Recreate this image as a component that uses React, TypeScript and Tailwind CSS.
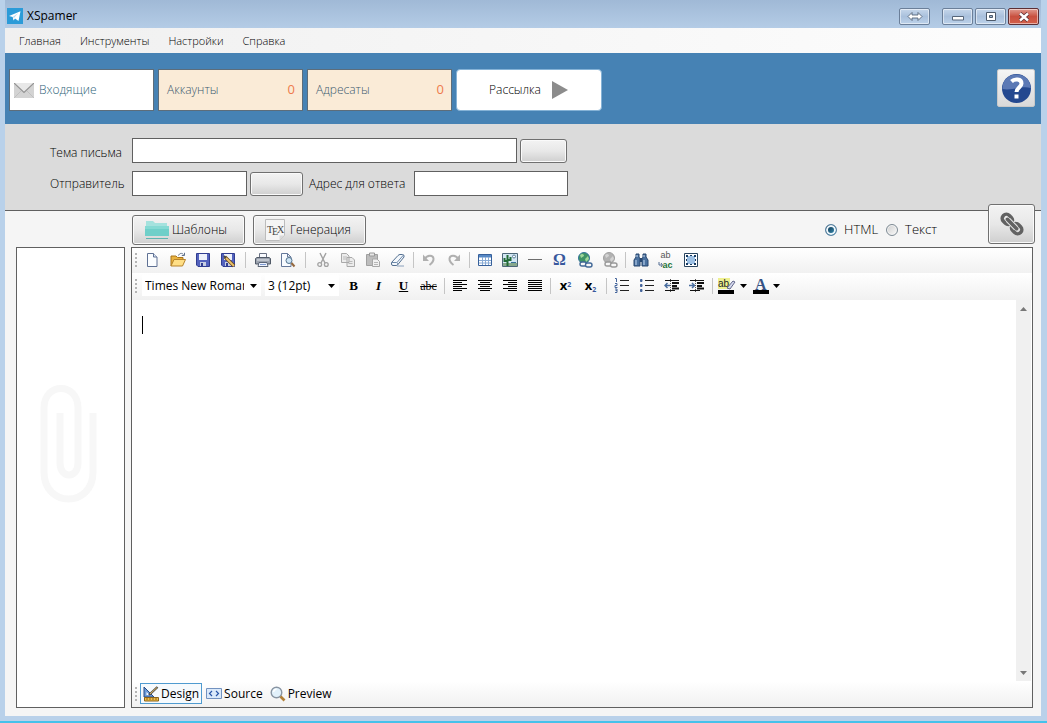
import React, { useState } from 'react';
import clsx from 'clsx';

const menu = ['Главная', 'Инструменты', 'Настройки', 'Справка'];

const grayButton =
  'border border-[#707070] rounded-[3px] bg-linear-to-b from-[#f3f3f3] from-0% via-[#e8e8e8] via-50% to-[#cfcfcf] shadow-[inset_0_0_0_1px_#fafafa]';

const fieldStyle = 'h-[25px] min-w-0 border border-[#606060] bg-white px-1 text-[12px] outline-none';

function Svg({ children }: { children: React.ReactNode }) {
  return (
    <svg width="16" height="16" viewBox="0 0 16 16" fill="none" aria-hidden="true" className="shrink-0">
      {children}
    </svg>
  );
}

const NewIcon = () => (
  <Svg>
    <path d="M2.5 1.5h6L12 5v9.500H2.500z" fill="#fbfdff" stroke="#5f7194" />
    <path d="M8.5 1.5V5H12" fill="#dce5f3" stroke="#5f7194" />
  </Svg>
);

const OpenIcon = () => (
  <Svg>
    <path d="M1 14V4h5l1.5 1.5H13V8" fill="#e9b33f" stroke="#a8741a" />
    <path d="M1 14 4 7.5h11.5L12.5 14z" fill="#ffdf86" stroke="#b7832a" />
    <path d="M8.5 3.5C9.5 1 12 .8 13.5 2.5M14.5.8v2.7h-2.7" stroke="#60728d" />
  </Svg>
);

const SaveIcon = ({ edit = false }: { edit?: boolean }) => (
  <Svg>
    <path d="M1.5 1.5h13v13H3L1.5 13z" fill="#5362bd" stroke="#303d91" />
    <path d="M4 2h8v6H4z" fill="#edf1fb" />
    <path d="M5 10h6v4H5z" fill="#c7cee3" />
    <path d="M6 11h2v3H6z" fill="#303d91" />
    {edit && (
      <>
        <path d="m5 5 9 9" stroke="#6c4b1d" strokeWidth="3.4" />
        <path d="m5 5 9 9" stroke="#edc268" strokeWidth="1.8" />
        <path d="m4 4 2 2" stroke="#454545" strokeWidth="2" />
      </>
    )}
  </Svg>
);

const PrintIcon = () => (
  <Svg>
    <path d="M4.5 6V1.5h7V6" fill="#f9fbff" stroke="#687082" />
    <path d="M.5 6.5 2 5.5h12l1.5 1V12H.5z" fill="#9ca3af" stroke="#505967" />
    <path d="M2 8h12" stroke="#e4e8ee" />
    <path d="M4 10.500h8l1 4H3z" fill="#eef3ff" stroke="#5c6677" />
    <path d="M5 12.5h6" stroke="#7e9ad1" />
  </Svg>
);

const FindPageIcon = () => (
  <Svg>
    <path d="M1.5 1.5h6L11 5v9.500H1.500z" fill="#f8fbff" stroke="#65789a" />
    <path d="M7.5 1.5V5H11" stroke="#65789a" />
    <circle cx="9" cy="8.5" r="3" fill="#cfe5f5" stroke="#53728d" />
    <path d="m11.5 11 3 3.5" stroke="#94683e" strokeWidth="2" />
  </Svg>
);

const CutIcon = () => (
  <Svg>
    <path d="m5 1 5 10M11 1 6 11" stroke="#a2a2a2" strokeWidth="1.4" />
    <circle cx="4.7" cy="12.5" r="1.9" stroke="#a2a2a2" strokeWidth="1.3" />
    <circle cx="11.3" cy="12.5" r="1.9" stroke="#a2a2a2" strokeWidth="1.3" />
  </Svg>
);

const CopyIcon = () => (
  <Svg>
    <path d="M1.5 1.5h5L9 4v6.5H1.5zM7 5.5h5L14.5 8v6.5H7z" fill="#ececec" stroke="#a9a9a9" />
    <path d="M3 5h4M3 7h4M8.5 9.5h4M8.5 11.5h4" stroke="#bababa" />
  </Svg>
);

const PasteIcon = () => (
  <Svg>
    <path d="M1.5 2.5h11v11h-11z" fill="#bdbdbd" stroke="#a0a0a0" />
    <path d="M4.5 1h5v3h-5z" fill="#e7e7e7" stroke="#999" />
    <path d="M7.5 7H12l2.500 2.500v5h-7z" fill="#f1f1f1" stroke="#a7a7a7" />
    <path d="M9 10.5h4M9 12.5h4" stroke="#b7b7b7" />
  </Svg>
);

const EraserIcon = () => (
  <Svg>
    <path d="M1.5 10.5 8 3.500q1-1 2-1h2.500Q14 2.500 14 4v1l-6.500 8q-.5.5-1.500.5H3q-1.500 0-1.500-1.500z" fill="#f4f8fc" stroke="#526e90" />
    <path d="M2 10.5h4.500q1 0 1 1V13M7 10.5 13.500 3" stroke="#6d89aa" />
    <path d="M7 14h7" stroke="#8aa0bc" />
  </Svg>
);

const UndoIcon = ({ redo = false }: { redo?: boolean }) => (
  <Svg>
    <g transform={redo ? 'matrix(-1 0 0 1 16 0)' : undefined}>
      <path d="M4 6.500C6 3 12 2.500 12.500 6.500c.3 3-2 5-4 6.500" stroke="#b0b0b0" strokeWidth="2" />
      <path d="M2 2.500V9h6z" fill="#b0b0b0" />
    </g>
  </Svg>
);

const TableIcon = () => (
  <Svg>
    <path d="M1.5 2.5h13v11h-13z" fill="#fff" stroke="#36609b" />
    <path d="M2 3h12v2.500H2z" fill="#5688c5" />
    <path d="M2 8.5h12M2 11h12M5.500 5v8M8.500 5v8M11.500 5v8" stroke="#89abd5" />
  </Svg>
);

const ImageIcon = () => (
  <Svg>
    <path d="M.5 1.5h15v13H.5z" fill="#d3e7f3" stroke="#4d6778" />
    <path d="M1 11h14v3H1z" fill="#87a88c" />
    <path d="M5.5 3v11M2.500 6v3h3M8.500 5v3h-3" stroke="#226b36" strokeWidth="2" />
    <circle cx="12" cy="4.5" r="1.5" fill="#fff" stroke="#597e9a" />
    <path d="M9 10.5h5" stroke="#36719a" />
  </Svg>
);

const LineIcon = () => (
  <Svg>
    <path d="M1 7.5h14" stroke="#6e6e6e" />
  </Svg>
);

const OmegaIcon = () => <span className="font-['Liberation_Serif',serif] text-[16px] leading-4 font-bold text-[#38589d]">Ω</span>;

const GlobeIcon = ({ off = false }: { off?: boolean }) => (
  <Svg>
    <circle cx="7" cy="6" r="5.5" fill={off ? '#b2b2b2' : '#3f9466'} stroke={off ? '#a0a0a0' : '#34759a'} />
    <path d="M3 3c2-2 4-1 4 1L4 6zM8 7l3-3 1 3-3 3z" fill={off ? '#d3d3d3' : '#a0d89a'} />
    <rect x="3" y="10" width="6.5" height="4" rx="2" fill="#f7f7f7" stroke={off ? '#999' : '#416897'} strokeWidth="1.4" />
    <rect x="8.5" y="11" width="6.5" height="4" rx="2" fill="#f7f7f7" stroke={off ? '#999' : '#416897'} strokeWidth="1.4" />
  </Svg>
);

const BinocularsIcon = () => (
  <Svg>
    <path d="M3 2h3v3l1 2v7H1V8l2-3zM10 2h3v3l2 3v6H9V7l1-2z" fill="#4a719f" stroke="#27476f" />
    <path d="M7 6h2v4H7z" fill="#27476f" />
    <path d="M3 8v5M11 8v5M4 3v2M11 3v2" stroke="#c6dcf4" />
  </Svg>
);

const ReplaceIcon = () => (
  <span className="flex w-4 flex-col font-['Liberation_Sans',sans-serif] text-[9px] leading-[10px]">
    <span className="text-[#555]">ab</span>
    <span className="flex items-center font-bold text-[#26743b]">
      <svg width="5" height="6" viewBox="0 0 5 6" fill="none" aria-hidden="true">
        <path d="M1 0v3h3M3 1l1.500 2L3 5" stroke="#536c93" />
      </svg>
      ac
    </span>
  </span>
);

const SelectAllIcon = () => (
  <Svg>
    <path d="M1.5 1.5h13v13h-13z" fill="#fff" stroke="#29445f" />
    <path d="M4 4h8v8H4z" fill="#9dc0e4" />
    <path d="M3 3h2v2H3zM11 3h2v2h-2zM3 11h2v2H3zM11 11h2v2h-2zM7 3h2v1H7zM7 12h2v1H7zM3 7h1v2H3zM12 7h1v2h-1z" fill="#173a60" />
  </Svg>
);

const alignPaths = {
  left: 'M1 2.5h14M1 4.5h9M1 6.5h14M1 8.5h9M1 10.5h14M1 12.5h9',
  center: 'M1 2.5h14M3 4.5h10M1 6.5h14M3 8.5h10M1 10.5h14M3 12.5h10',
  right: 'M1 2.5h14M6 4.5h9M1 6.5h14M6 8.5h9M1 10.5h14M6 12.5h9',
  justify: 'M1 2.5h14M1 4.5h14M1 6.5h14M1 8.5h14M1 10.5h14M1 12.5h14',
};

const AlignIcon = ({ side }: { side: keyof typeof alignPaths }) => (
  <Svg>
    <path d={alignPaths[side]} stroke="#000" />
  </Svg>
);

const ListIcon = ({ numbered = false }: { numbered?: boolean }) => (
  <Svg>
    <path d="M6 2.5h9M6 7.5h9M6 12.5h9" stroke="#222" />
    {numbered ? (
      <path d="M1 .5h1.500V4M1 5.500h2v2H1v2h2.500M1 11h2v3.500H1M1.500 12.500H3" stroke="#46669c" />
    ) : (
      <path d="M1.500 1.500H3v2H1.500zM1.500 6.500H3v2H1.500zM1.500 11.500H3v2H1.500z" fill="#46669c" stroke="#46669c" />
    )}
  </Svg>
);

const IndentIcon = ({ out = false }: { out?: boolean }) => (
  <Svg>
    <path d="M1 2.5h14M1 12.5h10" stroke="#111" />
    <path d="M8 5h7M8 8h5M8 10.5h7" stroke="#111" strokeWidth="1.8" />
    <path d={out ? 'M3.5 5 1 7.500 3.500 10M1 7.500h5' : 'M3 5l2.500 2.500L3 10M0 7.500h5.500'} stroke="#496d9f" strokeWidth="1.5" />
    <path d="M6.5 1v14" stroke="#555" strokeDasharray="1 1" />
  </Svg>
);

const CaretDown = () => (
  <svg width="7" height="4" viewBox="0 0 7 4" aria-hidden="true" className="shrink-0">
    <path d="M0 0h7L3.500 4z" fill="#000" />
  </svg>
);

function Tool({ label, children, disabled }: { label: string; children: React.ReactNode; disabled?: boolean }) {
  return (
    <button type="button" aria-label={label} disabled={disabled} className="flex h-6 w-[25px] shrink-0 items-center justify-center">
      {children}
    </button>
  );
}

function Sep({ wide }: { wide?: boolean }) {
  return (
    <span className={clsx('flex shrink-0 justify-center', wide ? 'w-[10px]' : 'w-[6px]')}>
      <span className="h-4 w-px bg-[#c5c5c5]" />
    </span>
  );
}

const Grip = () => (
  <span className="mr-[3px] flex w-[3px] shrink-0 flex-col gap-[2px] pl-px">
    {[0, 1, 2, 3].map((i) => (
      <span key={i} className="size-[2px] bg-[#b4b4b4]" />
    ))}
  </span>
);

function Dropdown({ label, value, className }: { label: string; value: string; className: string }) {
  return (
    <div className={clsx('relative shrink-0', className)}>
      <select
        aria-label={label}
        defaultValue={value}
        className="block h-[21px] w-full appearance-none overflow-hidden bg-white pr-[17px] pl-[3px] text-[12px] leading-5 outline-none"
      >
        <option>{value}</option>
      </select>
      <span className="pointer-events-none absolute top-0 right-1 flex h-[21px] items-center">
        <CaretDown />
      </span>
    </div>
  );
}

function WinButton({ label, close, children }: { label: string; close?: boolean; children: React.ReactNode }) {
  return (
    <button
      type="button"
      aria-label={label}
      className={clsx(
        'flex h-[17px] w-[31px] items-center justify-center rounded-[2px] border shadow-[inset_0_0_0_1px_#ffffff80]',
        close
          ? 'border-[#5c2f35] bg-linear-to-b from-[#df9a90] via-[#c8503f] via-50% to-[#d4604b]'
          : 'border-[#6b7f99] bg-linear-to-b from-[#c6d7eb] via-[#a9c0dc] via-50% to-[#bcd2ea]'
      )}
    >
      {children}
    </button>
  );
}

function TitleBar() {
  return (
    <header className="flex h-7 items-start justify-between bg-linear-to-b from-[#a0b9d6] to-[#b4cce6] pr-[2px] pl-[2px]">
      <div className="flex items-center gap-1 pt-2">
        <svg width="16" height="16" viewBox="0 0 16 16" aria-hidden="true">
          <path d="M0 0h16v16H0z" fill="#2b9bd8" />
          <path d="M2 8 13.5 3.200 11.500 13 8 10.500l-1.500 2-.8-3.500z" fill="#fff" />
          <path d="m5.700 9 5.500-4L7 10z" fill="#b9dcf0" />
        </svg>
        <h1 className="text-[12px] leading-4">XSpamer</h1>
      </div>
      <div className="flex pt-2">
        <WinButton label="Переключить">
          <svg width="16" height="9" viewBox="0 0 16 9" aria-hidden="true">
            <path d="m1 4.500 4-4V3h6V.5l4 4-4 4V6H5v2.500z" fill="#fff" stroke="#566579" strokeWidth=".9" />
          </svg>
        </WinButton>
        <div className="ml-3 flex gap-[2px]">
          <WinButton label="Свернуть">
            <svg width="12" height="9" viewBox="0 0 12 9" aria-hidden="true">
              <path d="M.5 4.500h11V8H.5z" fill="#fff" stroke="#566579" />
            </svg>
          </WinButton>
          <WinButton label="Развернуть">
            <svg width="12" height="9" viewBox="0 0 12 9" aria-hidden="true">
              <path d="M1.500.5h9v8h-9z" fill="#fff" stroke="#4d5a6b" />
              <path d="M4.500 3.500h3v2h-3z" fill="#9fb5d2" stroke="#4d5a6b" />
            </svg>
          </WinButton>
          <WinButton label="Закрыть" close>
            <svg width="12" height="10" viewBox="0 0 12 10" aria-hidden="true">
              <path d="m2 1.500 8 7M10 1.500l-8 7" stroke="#5b2f35" strokeWidth="4" />
              <path d="m2 1.500 8 7M10 1.500l-8 7" stroke="#fff" strokeWidth="2.4" />
            </svg>
          </WinButton>
        </div>
      </div>
    </header>
  );
}

function CountTile({ title, count }: { title: string; count: number }) {
  return (
    <button type="button" className="flex h-[42px] w-[145px] items-center justify-between border border-[#5d6d7a] bg-[#faebd7] pr-[7px] pl-2 text-[12px]">
      <span className="font-light text-[#3c5a70]">{title}</span>
      <span className="text-[13px] text-[#ee7a4c]">{count}</span>
    </button>
  );
}

function Banner() {
  return (
    <div className="flex h-[71px] items-start justify-between bg-[#4682b4] pt-4 pr-[6px] pl-1">
      <div className="flex gap-1">
        <button type="button" className="flex h-[42px] w-[145px] items-center gap-[5px] border border-[#5d6d7a] bg-white pl-1 text-[12px] font-light text-[#2f6478]">
          <svg width="20" height="15" viewBox="0 0 20 15" fill="none" aria-hidden="true">
            <path d="M0 0h20v15H0z" fill="#d3d3d3" />
            <path d="m0 15 7-7M20 15l-7-7" stroke="#c0c0c0" />
            <path d="m0 0 10 9.500L20 0z" fill="#e8e8e8" />
            <path d="m0 0 10 9.500L20 0" stroke="#929292" strokeWidth="1.2" />
          </svg>
          Входящие
        </button>
        <CountTile title="Аккаунты" count={0} />
        <CountTile title="Адресаты" count={0} />
        <button type="button" className="flex h-[42px] w-[146px] items-center justify-center gap-[10px] rounded-[4px] border border-[#85b2d6] bg-white text-[12px] font-light text-black">
          Рассылка
          <svg width="18" height="18" viewBox="0 0 18 18" aria-hidden="true">
            <path d="M1 0v18l16-9z" fill="#8c8c8c" />
          </svg>
        </button>
      </div>
      <button type="button" aria-label="Помощь" className="flex size-[38px] items-center justify-center rounded-[2px] border border-[#c9c9c9] bg-linear-to-b from-[#f5f5f5] to-[#d9d9d9]">
        <svg width="31" height="31" viewBox="0 0 31 31" fill="none" aria-hidden="true">
          <circle cx="15.5" cy="15.5" r="14.5" fill="#24488f" />
          <path d="M1.500 16C1 8 7 1.500 15.500 1.500S30 8 29.500 15c-8-3-18 3-28 1z" fill="#5c79b5" />
          <path d="M10.500 8.500c3-3 10-3 10 2 0 4-5 4-5 8.500" stroke="#fff" strokeWidth="4" />
          <path d="M13.500 21.500h4v4h-4z" fill="#fff" />
        </svg>
      </button>
    </div>
  );
}

function LetterForm() {
  return (
    <form className="flex h-[87px] flex-col gap-2 border-b border-[#606060] bg-[#dbdbdb] pt-[14px] pl-[45px] text-[12px] font-light">
      <div className="flex items-center">
        <label htmlFor="subject" className="w-[82px] pt-1 leading-5">Тема письма</label>
        <input id="subject" type="text" className={clsx(fieldStyle, 'w-[385px]')} />
        <button type="button" aria-label="Вставить в тему" className={clsx(grayButton, 'ml-[3px] h-6 w-[47px]')} />
      </div>
      <div className="flex items-center">
        <label htmlFor="sender" className="w-[82px] leading-5">Отправитель</label>
        <input id="sender" type="text" className={clsx(fieldStyle, 'w-[115px]')} />
        <button type="button" aria-label="Выбрать отправителя" className={clsx(grayButton, 'ml-[3px] h-6 w-[53px]')} />
        <label htmlFor="reply" className="ml-[6px] w-[105px] leading-5 whitespace-nowrap">Адрес для ответа</label>
        <input id="reply" type="text" className={clsx(fieldStyle, 'w-[154px]')} />
      </div>
    </form>
  );
}

function FormatRadio({ label, checked, onChange }: { label: string; checked: boolean; onChange: () => void }) {
  return (
    <label className="flex items-center gap-[7px]">
      <input
        type="radio"
        name="format"
        checked={checked}
        onChange={onChange}
        className="size-3 appearance-none rounded-full border border-[#7d8a94] bg-linear-to-br from-[#cfcfcf] to-[#fafafa] shadow-[inset_0_0_0_1px_#f4f4f4] checked:border-[#5580a0] checked:from-[#0b2a42] checked:to-[#3d9cc4] checked:shadow-[inset_0_0_0_2px_#eef6fb]"
      />
      {label}
    </label>
  );
}

function ModeBar() {
  const [format, setFormat] = useState('HTML');
  return (
    <div className="relative flex h-9 items-start justify-between pt-1 pl-[127px] text-[12px] font-light">
      <div className="flex gap-2">
        <button type="button" className={clsx(grayButton, 'flex h-[30px] w-[113px] items-center gap-[3px] pl-3')}>
          <svg width="24" height="20" viewBox="0 0 24 20" aria-hidden="true">
            <path d="M1 1h7l2 2h12v8H1z" fill="#a5e2de" />
            <path d="M0 6h24v10H0z" fill="#6fcfc9" />
            <path d="M0 6h24v3H0z" fill="#86dad4" />
            <path d="M1 18h22v1H1z" fill="#5eb5b1" />
          </svg>
          Шаблоны
        </button>
        <button type="button" className={clsx(grayButton, 'flex h-[30px] w-[113px] items-center gap-[5px] pl-[11px]')}>
          <svg width="20" height="22" viewBox="0 0 20 22" aria-hidden="true">
            <path d="M.5.5h19v16l-5 5H.5z" fill="#f5f5f5" stroke="#bcbcbc" />
            <path d="M19.500 16.500h-5v5z" fill="#d9d9d9" />
            <g fill="#444" className="font-['Liberation_Serif',serif] text-[10px]">
              <text x="2" y="14">T</text>
              <text x="7" y="16">E</text>
              <text x="12" y="14">X</text>
            </g>
          </svg>
          Генерация
        </button>
      </div>
      <div className="mr-[104px] flex h-[30px] items-center gap-2 text-[13px]">
        <FormatRadio label="HTML" checked={format === 'HTML'} onChange={() => setFormat('HTML')} />
        <FormatRadio label="Текст" checked={format === 'TEXT'} onChange={() => setFormat('TEXT')} />
      </div>
      <button type="button" aria-label="Ссылка" className={clsx(grayButton, 'absolute right-[6px] bottom-[3px] flex h-10 w-[47px] items-center justify-center')}>
        <svg width="26" height="26" viewBox="0 0 28 28" fill="none" stroke="#626262" strokeWidth="3.8" aria-hidden="true">
          <rect x="3" y="4.5" width="12" height="9" rx="4.5" transform="rotate(45 9 9)" />
          <rect x="13" y="14.5" width="12" height="9" rx="4.5" transform="rotate(45 19 19)" />
          <path d="m9.500 9.500 9 9" stroke="#e4e4e4" strokeWidth="6" />
          <path d="m9 9 10 10" strokeLinecap="round" />
        </svg>
      </button>
    </div>
  );
}

function Toolbars() {
  return (
    <div className="text-black">
      <div className="flex h-[25px] items-center bg-linear-to-b from-white to-[#f1f1f1] pb-[2px] pl-[2px]">
        <Grip />
        <div className="flex items-center">
          <Tool label="Новый"><NewIcon /></Tool>
          <Tool label="Открыть"><OpenIcon /></Tool>
          <Tool label="Сохранить"><SaveIcon /></Tool>
          <Tool label="Сохранить как"><SaveIcon edit /></Tool>
          <Sep wide />
          <Tool label="Печать"><PrintIcon /></Tool>
          <Tool label="Просмотр печати"><FindPageIcon /></Tool>
          <Sep wide />
          <Tool label="Вырезать" disabled><CutIcon /></Tool>
          <Tool label="Копировать" disabled><CopyIcon /></Tool>
          <Tool label="Вставить" disabled><PasteIcon /></Tool>
          <Tool label="Очистить"><EraserIcon /></Tool>
          <Sep />
          <Tool label="Отменить" disabled><UndoIcon /></Tool>
          <Tool label="Повторить" disabled><UndoIcon redo /></Tool>
          <Sep />
          <Tool label="Таблица"><TableIcon /></Tool>
          <Tool label="Изображение"><ImageIcon /></Tool>
          <Tool label="Линия"><LineIcon /></Tool>
          <Tool label="Символ"><OmegaIcon /></Tool>
          <Tool label="Вставить ссылку"><GlobeIcon /></Tool>
          <Tool label="Удалить ссылку" disabled><GlobeIcon off /></Tool>
          <Sep />
          <Tool label="Найти"><BinocularsIcon /></Tool>
          <Tool label="Заменить"><ReplaceIcon /></Tool>
          <Tool label="Выделить всё"><SelectAllIcon /></Tool>
        </div>
      </div>
      <div className="flex h-[27px] items-center bg-linear-to-b from-white to-[#f1f1f1] pb-[2px] pl-[2px]">
        <Grip />
        <Dropdown label="Шрифт" value="Times New Roman" className="ml-[2px] w-[119px]" />
        <Dropdown label="Размер" value="3 (12pt)" className="mr-[2px] ml-1 w-[74px]" />
        <div className="flex items-center font-['Liberation_Serif',serif] text-[13px] font-bold">
          <Tool label="Полужирный">B</Tool>
          <Tool label="Курсив"><i>I</i></Tool>
          <Tool label="Подчёркнутый"><u>U</u></Tool>
          <Tool label="Зачёркнутый"><s className="text-[12px] font-normal">abc</s></Tool>
          <Sep />
          <Tool label="По левому краю"><AlignIcon side="left" /></Tool>
          <Tool label="По центру"><AlignIcon side="center" /></Tool>
          <Tool label="По правому краю"><AlignIcon side="right" /></Tool>
          <Tool label="По ширине"><AlignIcon side="justify" /></Tool>
          <Sep />
          <Tool label="Надстрочный">
            <span className="font-['Open_Sans',sans-serif] leading-none">x<sup className="text-[7px] text-[#38589d]">2</sup></span>
          </Tool>
          <Tool label="Подстрочный">
            <span className="font-['Open_Sans',sans-serif] leading-none">x<sub className="text-[7px] text-[#38589d]">2</sub></span>
          </Tool>
          <Sep />
          <Tool label="Нумерованный список"><ListIcon numbered /></Tool>
          <Tool label="Маркированный список"><ListIcon /></Tool>
          <Tool label="Уменьшить отступ"><IndentIcon out /></Tool>
          <Tool label="Увеличить отступ"><IndentIcon /></Tool>
          <Sep />
          <button type="button" aria-label="Цвет выделения" className="flex h-6 w-[35px] items-center justify-center gap-1">
            <svg width="18" height="16" viewBox="0 0 18 16" fill="none" aria-hidden="true" className="overflow-visible">
              <path d="M0 0h12v11H0z" fill="#eef08f" />
              <text x="0" y="9" fill="#222" className="font-['Liberation_Sans',sans-serif] text-[10px] font-normal">ab</text>
              <path d="m9 10 6-7 2 1-5 7z" fill="#d5d9ed" stroke="#61658b" />
              <path d="M0 12h16v4H0z" fill="#000" />
            </svg>
            <CaretDown />
          </button>
          <button type="button" aria-label="Цвет текста" className="flex h-6 w-[33px] items-center justify-center gap-1">
            <svg width="16" height="16" viewBox="0 0 16 16" aria-hidden="true" className="overflow-visible">
              <text x="2" y="12" fill="#355284" className="font-['Liberation_Serif',serif] text-[16px] font-bold">A</text>
              <path d="M0 12h16v4H0z" fill="#000" />
            </svg>
            <CaretDown />
          </button>
        </div>
      </div>
    </div>
  );
}

function ViewTabs() {
  const [view, setView] = useState('Design');
  const tabs = [
    {
      name: 'Design',
      icon: (
        <>
          <path d="M1 1v10h10z" fill="#6d9bd8" stroke="#244b86" />
          <path d="M3.500 6v3h3z" fill="#fff" />
          <path d="M6 9 14.500 1" stroke="#4d4d4d" strokeWidth="2.4" />
          <path d="m7 8 7-6.500" stroke="#ddb35a" />
          <path d="M1.500 11.500h14V15h-14z" fill="#f0bd47" stroke="#8b6319" />
          <path d="M4 12v2M7 12v2M10 12v2M13 12v2" stroke="#8b6319" />
        </>
      ),
    },
    {
      name: 'Source',
      icon: (
        <>
          <path d="M.5 2.500h15v10H.5z" fill="#dae9fa" stroke="#7292c0" />
          <path d="M6 5 3.500 7.500 6 10M10 5l2.500 2.500L10 10" stroke="#2754a6" strokeWidth="1.2" />
        </>
      ),
    },
    {
      name: 'Preview',
      icon: (
        <>
          <circle cx="6.5" cy="6.5" r="5.3" fill="#e2f1fb" stroke="#8995a3" strokeWidth="1.4" />
          <path d="M3.500 6c.3-2 1.500-2.600 3-2.700" stroke="#fff" strokeWidth="1.5" />
          <path d="m10.500 10.500 4 4" stroke="#b28038" strokeWidth="2.6" />
        </>
      ),
    },
  ];
  return (
    <div className="flex h-[26px] items-center bg-linear-to-b from-white to-[#f1f1f1] pb-px pl-[2px]">
      <Grip />
      <div className="flex gap-px">
        {tabs.map((tab) => (
          <button
            key={tab.name}
            type="button"
            aria-pressed={view === tab.name}
            onClick={() => setView(tab.name)}
            className={clsx(
              'flex h-[21px] items-center gap-[2px] border px-[2px] text-[12px] leading-4',
              view === tab.name ? 'border-[#4f9bd0] bg-[#f6fafd]' : 'border-transparent'
            )}
          >
            <Svg>{tab.icon}</Svg>
            {tab.name}
          </button>
        ))}
      </div>
    </div>
  );
}

function Editor() {
  return (
    <section className="flex min-w-0 flex-1 flex-col border border-[#606060] bg-white">
      <Toolbars />
      <div className="flex flex-1">
        <div className="relative flex flex-1">
          <textarea aria-label="Текст письма" className="min-h-40 flex-1 resize-none px-[10px] py-4 font-['Liberation_Serif',serif] text-[16px] outline-none" />
          <span className="pointer-events-none absolute top-4 left-[10px] h-[18px] w-px bg-black" />
        </div>
        <div className="mr-px flex w-[15px] flex-col justify-between bg-[#f0f0f0]">
          <button type="button" aria-label="Вверх" className="flex h-[17px] items-center justify-center">
            <svg width="7" height="4" viewBox="0 0 7 4" aria-hidden="true"><path d="M0 4h7L3.500 0z" fill="#777" /></svg>
          </button>
          <button type="button" aria-label="Вниз" className="flex h-[17px] items-center justify-center">
            <svg width="7" height="4" viewBox="0 0 7 4" aria-hidden="true"><path d="M0 0h7L3.500 4z" fill="#777" /></svg>
          </button>
        </div>
      </div>
      <ViewTabs />
    </section>
  );
}

export default function App() {
  return (
    <div className="flex min-h-screen flex-col border-b-2 border-[#45c1ea] bg-[#b9d1ea] font-['Open_Sans','Noto_Sans',sans-serif] text-black">
      <div className="flex flex-1 flex-col pr-[6px] pb-[5px] pl-[5px]">
        <TitleBar />
        <nav className="flex h-[25px] items-center gap-[19px] bg-linear-to-r from-[#f0f0f0] to-[#fdfdfd] pt-px pl-[14px] text-[11px] font-light">
          {menu.map((item) => (
            <button key={item} type="button">{item}</button>
          ))}
        </nav>
        <Banner />
        <main className="flex flex-1 flex-col bg-[#f5f5f5]">
          <LetterForm />
          <ModeBar />
          <div className="flex flex-1 gap-[6px] pr-2 pb-2 pl-[11px]">
            {/* Attachments */}
            <aside aria-label="Вложения" className="flex w-[109px] shrink-0 justify-center border border-[#606060] bg-white pt-[137px] pr-1">
              <svg width="57" height="118" viewBox="0 0 57 118" fill="none" stroke="#f7f7f7" strokeWidth="7" aria-hidden="true">
                <path d="M53 28v59c0 36-49 36-49 0V23C4 -3 38 -3 38 23v55c0 16-18 16-18 0V28" />
              </svg>
            </aside>
            <Editor />
          </div>
        </main>
      </div>
    </div>
  );
}
